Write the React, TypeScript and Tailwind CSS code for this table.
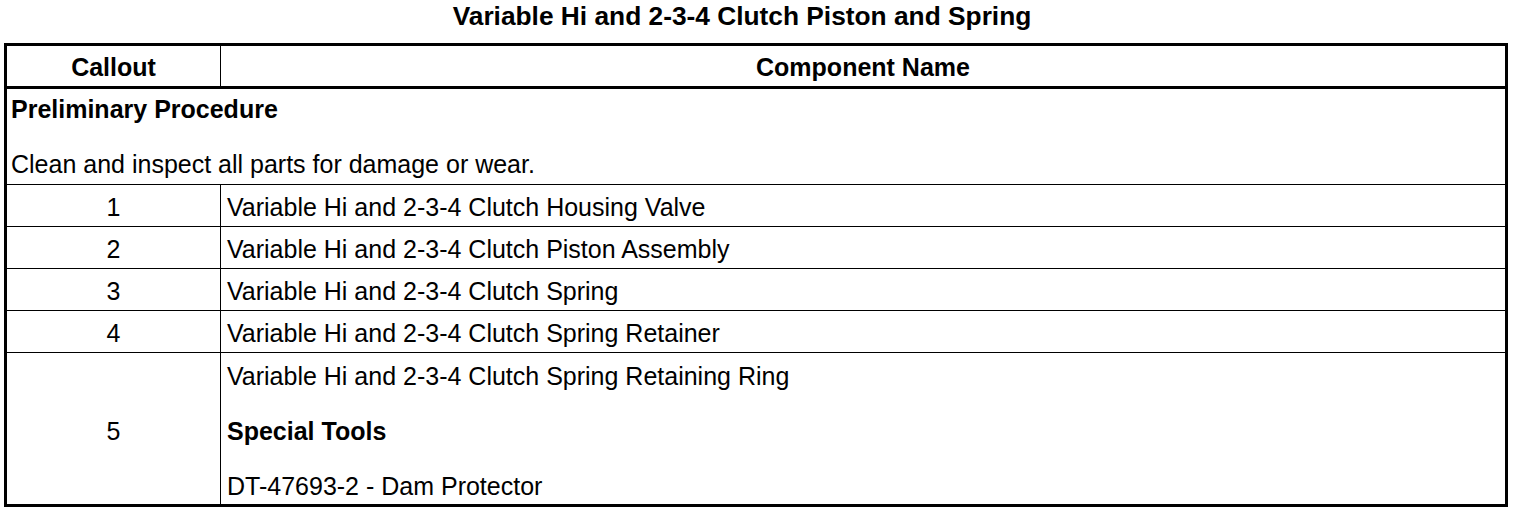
import React from "react";

const rows = [
  { n: "1", t: "Variable Hi and 2-3-4 Clutch Housing Valve" },
  { n: "2", t: "Variable Hi and 2-3-4 Clutch Piston Assembly" },
  { n: "3", t: "Variable Hi and 2-3-4 Clutch Spring" },
  { n: "4", t: "Variable Hi and 2-3-4 Clutch Spring Retainer" },
];

export default function App() {
  return (
    <div
      className="w-[1520px] h-[514px] bg-white text-black overflow-hidden"
      style={{ fontFamily: '"Liberation Sans", Arial, sans-serif' }}
    >
      <div className="h-[43px] flex items-start justify-center pr-[36px]">
        <div className="text-[26.3px] font-bold leading-[32px]">
          Variable Hi and 2-3-4 Clutch Piston and Spring
        </div>
      </div>
      <div className="ml-[4px] w-[1504px] border-[3px] border-black text-[25px]">
        <div className="flex h-[43px] border-b-[3px] border-black font-bold">
          <div className="w-[214px] border-r border-black flex items-center justify-center pt-[4px]">
            Callout
          </div>
          <div className="flex-1 flex items-center justify-center pt-[4px]">Component Name</div>
        </div>
        <div className="h-[96px] border-b border-black pl-[4px] flex flex-col gap-[14px]">
          <div className="h-[41px] flex items-center font-bold">Preliminary Procedure</div>
          <div className="h-[40px] flex items-center pt-[2px]">
            Clean and inspect all parts for damage or wear.
          </div>
        </div>
        {rows.map((r) => (
          <div key={r.n} className="flex h-[42px] border-b border-black">
            <div className="w-[214px] border-r border-black flex items-center justify-center pt-[4px]">
              {r.n}
            </div>
            <div className="flex-1 flex items-center pl-[6px] pt-[4px]">{r.t}</div>
          </div>
        ))}
        <div className="flex h-[151px]">
          <div className="w-[214px] border-r border-black flex items-center justify-center pt-[6px]">
            5
          </div>
          <div className="flex-1 flex flex-col pl-[6px] gap-[14px]">
            <div className="h-[41px] flex items-center pt-[6px]">
              Variable Hi and 2-3-4 Clutch Spring Retaining Ring
            </div>
            <div className="h-[41px] flex items-center pt-[6px] font-bold">Special Tools</div>
            <div className="h-[41px] flex items-center pt-[6px]">DT-47693-2 - Dam Protector</div>
          </div>
        </div>
      </div>
    </div>
  );
}
